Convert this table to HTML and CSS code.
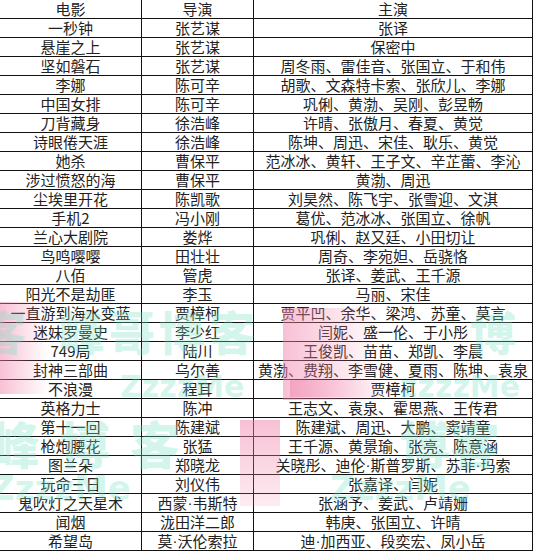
FILE: index.html
```html
<!DOCTYPE html>
<html lang="zh">
<head>
<meta charset="utf-8">
<link rel="stylesheet" href="styles.css">
</head>
<body>
<div class="page">
  <div class="sheet">
    <div class="cell head">电影</div><div class="cell head">导演</div><div class="cell head">主演</div>
    <div class="cell">一秒钟</div><div class="cell">张艺谋</div><div class="cell">张译</div>
    <div class="cell">悬崖之上</div><div class="cell">张艺谋</div><div class="cell">保密中</div>
    <div class="cell">坚如磐石</div><div class="cell">张艺谋</div><div class="cell">周冬雨、雷佳音、张国立、于和伟</div>
    <div class="cell">李娜</div><div class="cell">陈可辛</div><div class="cell">胡歌、文森特卡索、张欣儿、李娜</div>
    <div class="cell">中国女排</div><div class="cell">陈可辛</div><div class="cell">巩俐、黄渤、吴刚、彭昱畅</div>
    <div class="cell">刀背藏身</div><div class="cell">徐浩峰</div><div class="cell">许晴、张傲月、春夏、黄觉</div>
    <div class="cell">诗眼倦天涯</div><div class="cell">徐浩峰</div><div class="cell">陈坤、周迅、宋佳、耿乐、黄觉</div>
    <div class="cell">她杀</div><div class="cell">曹保平</div><div class="cell">范冰冰、黄轩、王子文、辛芷蕾、李沁</div>
    <div class="cell">涉过愤怒的海</div><div class="cell">曹保平</div><div class="cell">黄渤、周迅</div>
    <div class="cell">尘埃里开花</div><div class="cell">陈凯歌</div><div class="cell">刘昊然、陈飞宇、张雪迎、文淇</div>
    <div class="cell">手机2</div><div class="cell">冯小刚</div><div class="cell">葛优、范冰冰、张国立、徐帆</div>
    <div class="cell">兰心大剧院</div><div class="cell">娄烨</div><div class="cell">巩俐、赵又廷、小田切让</div>
    <div class="cell">鸟鸣嘤嘤</div><div class="cell">田壮壮</div><div class="cell">周奇、李宛妲、岳骁恪</div>
    <div class="cell">八佰</div><div class="cell">管虎</div><div class="cell">张译、姜武、王千源</div>
    <div class="cell">阳光不是劫匪</div><div class="cell">李玉</div><div class="cell">马丽、宋佳</div>
    <div class="cell">一直游到海水变蓝</div><div class="cell">贾樟柯</div><div class="cell">贾平凹、余华、梁鸿、苏童、莫言</div>
    <div class="cell">迷妹罗曼史</div><div class="cell">李少红</div><div class="cell">闫妮、盛一伦、于小彤</div>
    <div class="cell">749局</div><div class="cell">陆川</div><div class="cell">王俊凯、苗苗、郑凯、李晨</div>
    <div class="cell">封神三部曲</div><div class="cell">乌尔善</div><div class="cell">黄渤、费翔、李雪健、夏雨、陈坤、袁泉</div>
    <div class="cell">不浪漫</div><div class="cell">程耳</div><div class="cell">贾樟柯</div>
    <div class="cell">英格力士</div><div class="cell">陈冲</div><div class="cell">王志文、袁泉、霍思燕、王传君</div>
    <div class="cell">第十一回</div><div class="cell">陈建斌</div><div class="cell">陈建斌、周迅、大鹏、窦靖童</div>
    <div class="cell">枪炮腰花</div><div class="cell">张猛</div><div class="cell">王千源、黄景瑜、张亮、陈意涵</div>
    <div class="cell">图兰朵</div><div class="cell">郑晓龙</div><div class="cell">关晓彤、迪伦<span class="dot">·</span>斯普罗斯、苏菲<span class="dot">·</span>玛索</div>
    <div class="cell">玩命三日</div><div class="cell">刘仪伟</div><div class="cell">张嘉译、闫妮</div>
    <div class="cell">鬼吹灯之天星术</div><div class="cell">西蒙<span class="dot">·</span>韦斯特</div><div class="cell">张涵予、姜武、卢靖姗</div>
    <div class="cell">闻烟</div><div class="cell">泷田洋二郎</div><div class="cell">韩庚、张国立、许晴</div>
    <div class="cell">希望岛</div><div class="cell">莫<span class="dot">·</span>沃伦索拉</div><div class="cell">迪<span class="dot">·</span>加西亚、段奕宏、凤小岳</div>
  </div>

  <div class="wm pink p1"></div>
  <div class="wm pink p2"></div>
  <div class="wm pink p3"></div>
  <div class="wm pink p4"></div>
  <div class="wm teal t1">客&nbsp;&nbsp;峰哥博客</div>
  <div class="wm teal t2">博</div>
  <div class="wm teal z1">ZzzzMe</div>
  <div class="wm teal z2">zzzzMe</div>
  <div class="wm teal t3">峰博客</div>
  <div class="wm teal t4">博客</div>
  <div class="wm teal z3">ZzzzMe</div>
  <div class="wm teal z4">ZzzzMe</div>
</div>
</body>
</html>
```

FILE: styles.css
```css
html, body {
  margin: 0;
  padding: 0;
  background: #ffffff;
}

.page {
  position: relative;
  width: 535px;
  height: 552px;
  overflow: hidden;
}

.sheet {
  display: grid;
  grid-template-columns: 142px 112px 279px;
  grid-auto-rows: 19px;
  width: 533px;
  font-family: "Noto Sans CJK SC", "Noto Sans", sans-serif;
  font-size: 15px;
  color: #222222;
}

.cell {
  box-sizing: border-box;
  border-right: 1px solid #111;
  border-bottom: 1px solid #111;
  display: flex;
  align-items: center;
  justify-content: center;
  white-space: nowrap;
  line-height: 18px;
}

.dot {
  font-family: "Liberation Sans", sans-serif;
}

.wm {
  position: absolute;
  pointer-events: none;
}

.pink {
  background: linear-gradient(to right, rgba(240, 130, 170, 0.5), rgba(240, 130, 170, 0));
}

.p1 { left: 0; top: 302px; width: 48px; height: 92px; }
.p2 { left: 283px; top: 308px; width: 100px; height: 92px; }
.p3 { left: 240px; top: 420px; width: 40px; height: 86px;
  background: linear-gradient(to bottom, rgba(240, 130, 170, 0.5), rgba(240, 130, 170, 0.15)); }
.p4 { left: 290px; top: 380px; width: 100px; height: 17px; }

.teal {
  color: rgba(120, 225, 195, 0.32);
  font-family: "Noto Sans CJK SC", sans-serif;
  font-weight: 900;
  white-space: nowrap;
}

.t1 { left: -20px; top: 300px; font-size: 46px; line-height: 60px; letter-spacing: 4px; }
.t2 { left: 470px; top: 300px; font-size: 46px; line-height: 60px; }
.z1 { left: 120px; top: 372px; font-size: 30px; line-height: 30px; font-family: "DejaVu Sans", sans-serif; }
.z2 { left: 400px; top: 372px; font-size: 30px; line-height: 30px; font-family: "DejaVu Sans", sans-serif; }
.t3 { left: -10px; top: 412px; font-size: 50px; line-height: 60px; letter-spacing: 20px; }
.t4 { left: 400px; top: 412px; font-size: 50px; line-height: 60px; }
.z3 { left: -10px; top: 470px; font-size: 34px; line-height: 36px; font-family: "DejaVu Sans", sans-serif; }
.z4 { left: 330px; top: 470px; font-size: 34px; line-height: 36px; font-family: "DejaVu Sans", sans-serif; }
```
